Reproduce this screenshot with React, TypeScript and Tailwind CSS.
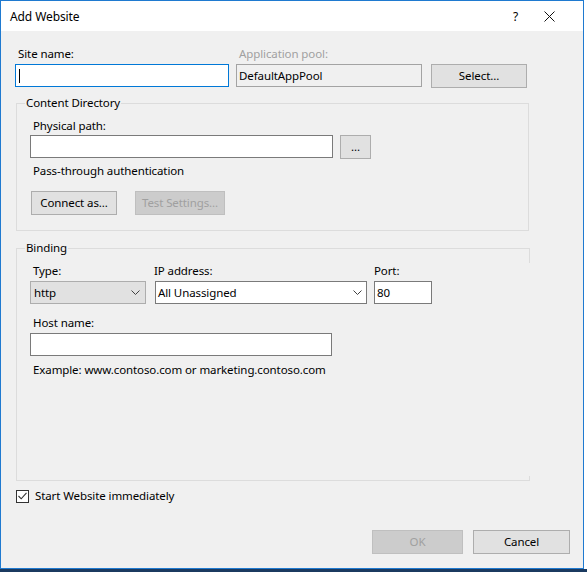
import React from "react";

const font = { fontFamily: '"Noto Sans", "Segoe UI", sans-serif' };

function Chevron() {
  return (
    <svg width="9" height="5" viewBox="0 0 9 5" className="block">
      <path d="M0.5 0.5 L4.5 4.5 L8.5 0.5" fill="none" stroke="#404040" strokeWidth="1" />
    </svg>
  );
}

function Btn({ children, w, disabled }: { children: React.ReactNode; w: string; disabled?: boolean }) {
  return (
    <div
      className={
        disabled
          ? `${w} h-[24px] flex items-center justify-center border border-[#bfbfbf] bg-[#cccccc] text-[#a0a0a0]`
          : `${w} h-[24px] flex items-center justify-center border border-[#adadad] bg-[#e1e1e1] text-black`
      }
    >
      {children}
    </div>
  );
}

export default function App() {
  return (
    <div
      className="w-[587px] h-[572px] flex flex-col bg-white text-[11.5px] tracking-[-0.1px] leading-4 text-black"
      style={font}
    >
      <div className="flex flex-1">
        <div className="w-[584px] h-[569px] border border-[#1f7ad0] flex flex-col">
          {/* title bar */}
          <div className="h-[30px] bg-white flex items-center pl-[9px] pt-[2px] relative">
            <span className="text-[12px]">Add Website</span>
            <span className="absolute left-[512px] top-[8px] text-[12px]">?</span>
            <svg className="absolute left-[543px] top-[10px]" width="11" height="11" viewBox="0 0 11 11">
              <path d="M0.5 0.5 L10.5 10.5 M10.5 0.5 L0.5 10.5" stroke="#111" strokeWidth="1" />
            </svg>
          </div>
          {/* body */}
          <div className="flex-1 bg-[#f0f0f0] flex flex-col">
            {/* row 1 */}
            <div className="flex pl-[14px] pt-[14px]">
              <div className="flex flex-col w-[214px]">
                <span className="pl-[3px] h-4 pt-px">Site name:</span>
                <div className="mt-[3px] h-[23px] border border-[#0078d7] bg-white flex items-center pl-[3px]">
                  <div className="w-px h-[14px] bg-black" />
                </div>
              </div>
              <div className="flex flex-col w-[186px] ml-[7px]">
                <span className="pl-[3px] h-4 pt-px text-[#a0a0a0]">Application pool:</span>
                <div className="mt-[3px] h-[23px] border border-[#a3a3a3] bg-[#f0f0f0] flex items-center pl-[2px]">
                  DefaultAppPool
                </div>
              </div>
              <div className="ml-[9px] mt-[19px]">
                <Btn w="w-[96px]">Select...</Btn>
              </div>
            </div>

            {/* Content Directory group */}
            <div className="ml-[15px] mt-[15px] w-[513px] border border-[#dcdcdc] relative pl-[13px] pt-[14px] pb-[15px]">
              <span className="absolute left-[8px] top-[-9px] bg-[#f0f0f0] px-px">Content Directory</span>
              <div className="pl-[3px] h-4">Physical path:</div>
              <div className="mt-px flex">
                <div className="w-[303px] h-[23px] border border-[#7a7a7a] bg-white" />
                <div className="ml-[7px]">
                  <Btn w="w-[31px]">...</Btn>
                </div>
              </div>
              <div className="pl-[3px] mt-[4px] h-4">Pass-through authentication</div>
              <div className="mt-[12px] flex">
                <div className="ml-px">
                  <Btn w="w-[86px]">Connect as...</Btn>
                </div>
                <div className="ml-[18px]">
                  <Btn w="w-[90px]" disabled>
                    Test Settings...
                  </Btn>
                </div>
              </div>
            </div>

            {/* Binding group */}
            <div className="ml-[15px] mt-[17px] w-[513px] h-[233px] border-t border-l border-b border-[#dcdcdc] relative pl-[13px] pt-[14px]">
              <span className="absolute left-[8px] top-[-9px] bg-[#f0f0f0] px-px">Binding</span>
              <div className="absolute right-[-1px] top-[-1px] w-px h-[15px] bg-[#dcdcdc]" />
              <div className="absolute right-[-1px] bottom-[-1px] w-px h-[5px] bg-[#dcdcdc]" />
              <div className="flex">
                <div className="flex flex-col w-[116px]">
                  <span className="pl-[3px] h-4">Type:</span>
                  <div className="mt-[2px] h-[23px] border border-[#adadad] bg-[#e1e1e1] flex items-center justify-between pl-[3px] pr-[5px]">
                    <span>http</span>
                    <Chevron />
                  </div>
                </div>
                <div className="flex flex-col w-[212px] ml-[9px]">
                  <span className="h-4 -ml-px">IP address:</span>
                  <div className="mt-[2px] h-[23px] border border-[#7a7a7a] bg-white flex items-center justify-between pl-[2px] pr-[4px]">
                    <span>All Unassigned</span>
                    <Chevron />
                  </div>
                </div>
                <div className="flex flex-col w-[58px] ml-[7px]">
                  <span className="h-4">Port:</span>
                  <div className="mt-[2px] h-[23px] border border-[#7a7a7a] bg-white flex items-center pl-[2px]">80</div>
                </div>
              </div>
              <div className="pl-[3px] mt-[11px] h-4">Host name:</div>
              <div className="mt-[2px] w-[302px] h-[23px] border border-[#7a7a7a] bg-white" />
              <div className="pl-[3px] mt-[6px] h-4">Example: www.contoso.com or marketing.contoso.com</div>
            </div>

            {/* checkbox */}
            <div className="flex items-center ml-[15px] mt-[7px] h-4">
              <div className="w-[13px] h-[13px] border border-[#333333] bg-white flex items-center justify-center">
                <svg width="9" height="8" viewBox="0 0 9 8">
                  <path d="M0.5 4 L3.2 6.8 L8.5 0.8" fill="none" stroke="#333" strokeWidth="1.1" />
                </svg>
              </div>
              <span className="ml-[6px]">Start Website immediately</span>
            </div>

            {/* footer buttons */}
            <div className="flex justify-end pr-[13px] mt-[26px]">
              <Btn w="w-[91px]" disabled>
                OK
              </Btn>
              <div className="ml-[10px]">
                <Btn w="w-[97px]">Cancel</Btn>
              </div>
            </div>
          </div>
        </div>
        <div className="flex-1 bg-white" />
      </div>
      <div className="h-[3px] bg-[#1b3a60]" />
    </div>
  );
}
